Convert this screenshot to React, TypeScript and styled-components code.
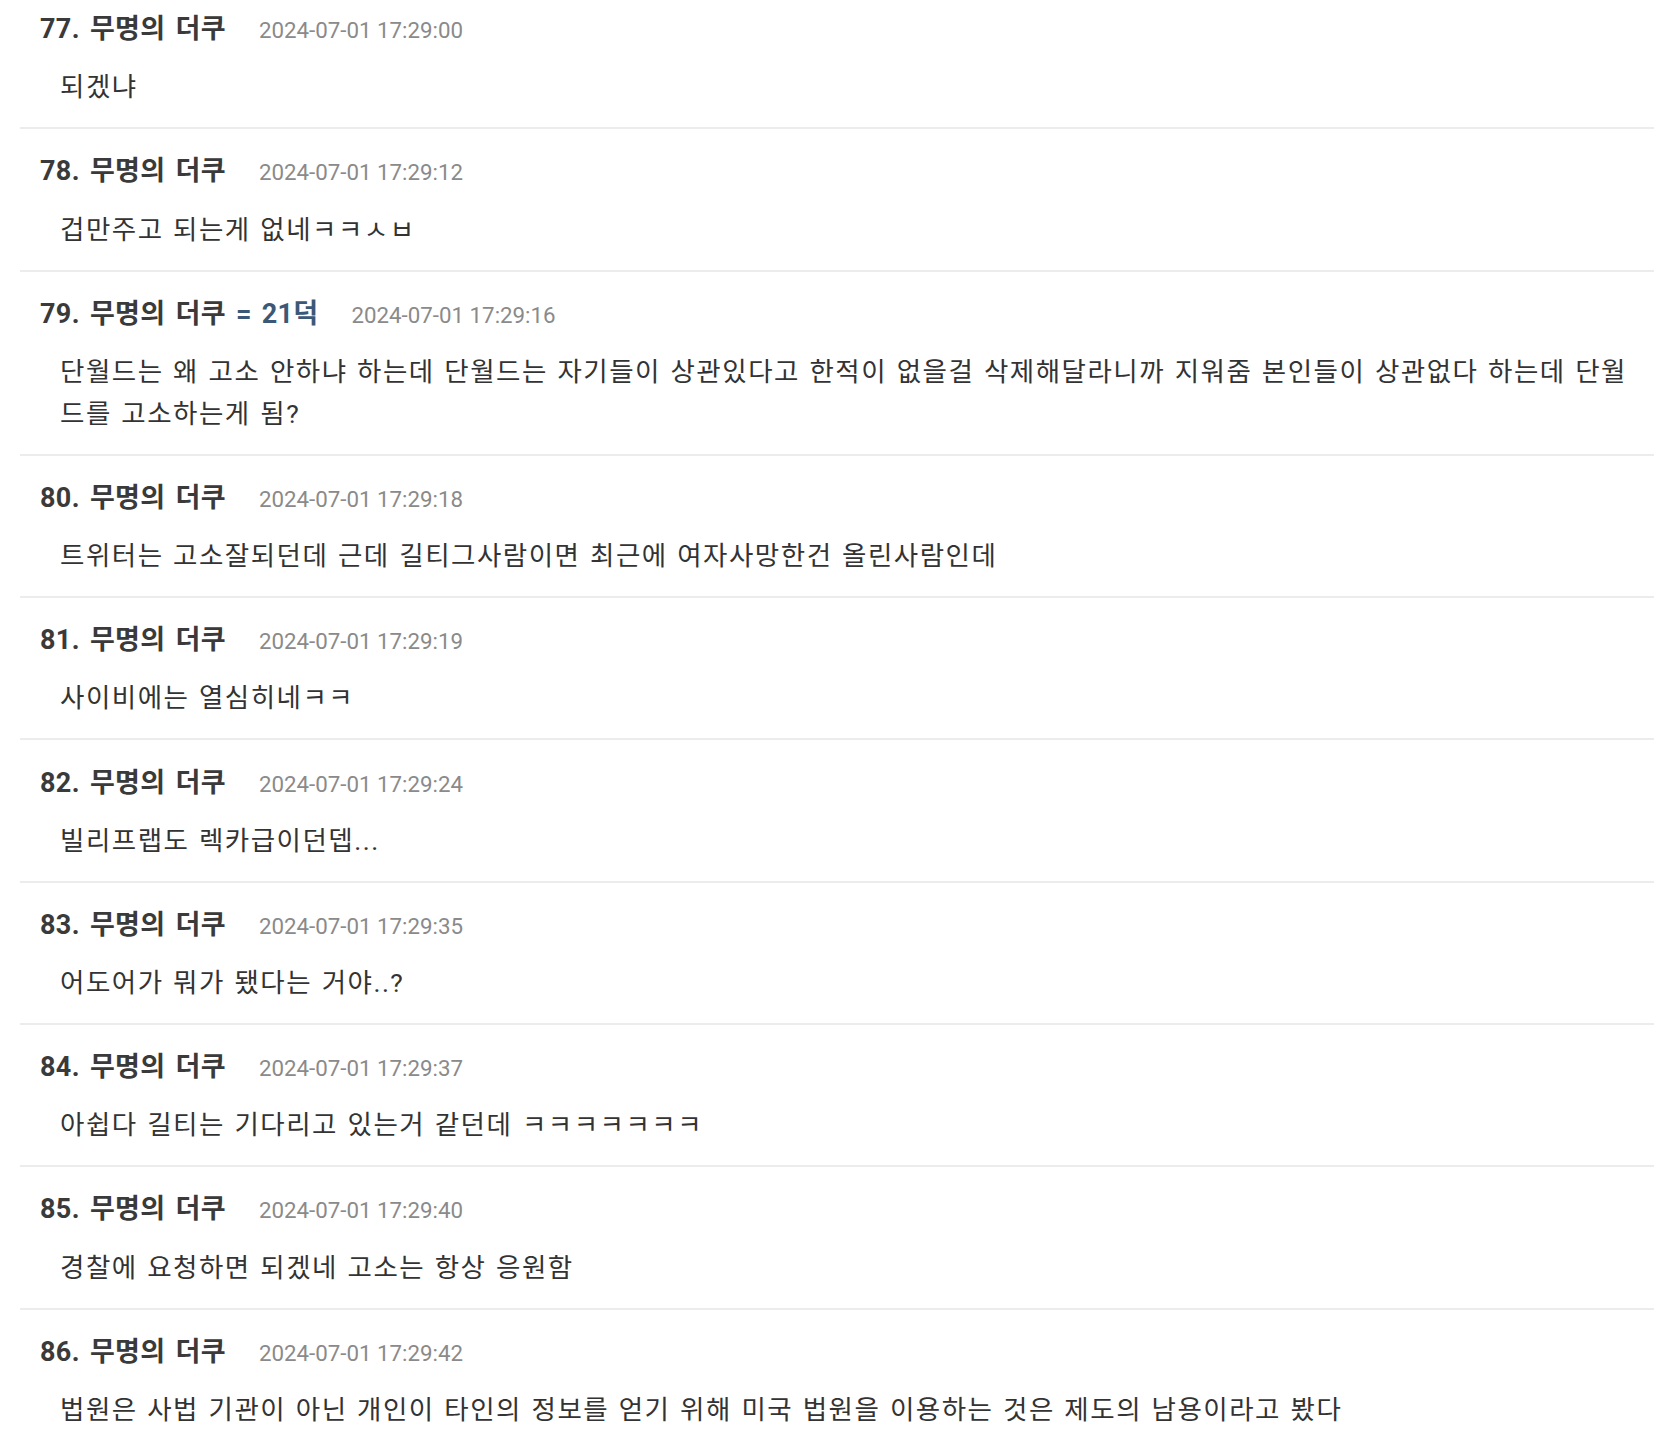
import React from "react";
import styled, { createGlobalStyle } from "styled-components";

const GlobalStyle = createGlobalStyle`
  html, body {
    margin: 0;
    padding: 0;
    background: #ffffff;
  }
  body {
    font-family: Roboto, "Noto Sans CJK KR", "Liberation Sans", sans-serif;
    color: #333333;
  }
`;

const Page = styled.div`
  width: 1670px;
  box-sizing: border-box;
  padding: 0 16px 0 20px;
  overflow: hidden;
`;

const List = styled.ul`
  list-style: none;
  margin: -13px 0 0 0;
  padding: 0;
`;

const Row = styled.li`
  padding: 24.2px 20px 19px 20px;
  border-bottom: 2px solid #ececec;
`;

const Header = styled.div`
  display: flex;
  align-items: baseline;
  height: 36px;
  line-height: 36px;
  white-space: nowrap;
`;

const Name = styled.span`
  font-size: 27px;
  font-weight: 700;
  color: #3a3a3a;
  letter-spacing: 0.35px;
  word-spacing: 3px;
`;

const Badge = styled.span`
  font-size: 27px;
  font-weight: 700;
  color: #3b5878;
  margin-left: 10px;
  letter-spacing: 0.3px;
  word-spacing: 3px;
`;

const DateText = styled.span`
  font-size: 22.3px;
  font-weight: 400;
  color: #8a8a8a;
  margin-left: 33px;
`;

const Body = styled.p`
  margin: 19.1px 0 0 0;
  padding: 0 0 0 20px;
  font-size: 26.5px;
  line-height: 42px;
  color: #333333;
  letter-spacing: 1.5px;
  word-spacing: 1.5px;
  word-break: normal;
`;

type Comment = {
  n: number;
  date: string;
  text: string;
  badge?: string;
};

const comments: Comment[] = [
  { n: 77, date: "2024-07-01 17:29:00", text: "되겠냐" },
  { n: 78, date: "2024-07-01 17:29:12", text: "겁만주고 되는게 없네ㅋㅋㅅㅂ" },
  {
    n: 79,
    badge: "= 21덕",
    date: "2024-07-01 17:29:16",
    text:
      "단월드는 왜 고소 안하냐 하는데 단월드는 자기들이 상관있다고 한적이 없을걸 삭제해달라니까 지워줌 본인들이 상관없다 하는데 단월드를 고소하는게 됨?",
  },
  {
    n: 80,
    date: "2024-07-01 17:29:18",
    text: "트위터는 고소잘되던데 근데 길티그사람이면 최근에 여자사망한건 올린사람인데",
  },
  { n: 81, date: "2024-07-01 17:29:19", text: "사이비에는 열심히네ㅋㅋ" },
  { n: 82, date: "2024-07-01 17:29:24", text: "빌리프랩도 렉카급이던뎁..." },
  { n: 83, date: "2024-07-01 17:29:35", text: "어도어가 뭐가 됐다는 거야..?" },
  {
    n: 84,
    date: "2024-07-01 17:29:37",
    text: "아쉽다 길티는 기다리고 있는거 같던데 ㅋㅋㅋㅋㅋㅋㅋ",
  },
  { n: 85, date: "2024-07-01 17:29:40", text: "경찰에 요청하면 되겠네 고소는 항상 응원함" },
  {
    n: 86,
    date: "2024-07-01 17:29:42",
    text:
      "법원은 사법 기관이 아닌 개인이 타인의 정보를 얻기 위해 미국 법원을 이용하는 것은 제도의 남용이라고 봤다",
  },
];

export default function App() {
  return (
    <>
      <GlobalStyle />
      <Page>
        <List>
          {comments.map((c) => (
            <Row key={c.n}>
              <Header>
                <Name>{`${c.n}. 무명의 더쿠`}</Name>
                {c.badge && <Badge>{c.badge}</Badge>}
                <DateText>{c.date}</DateText>
              </Header>
              <Body>{c.text}</Body>
            </Row>
          ))}
        </List>
      </Page>
    </>
  );
}
